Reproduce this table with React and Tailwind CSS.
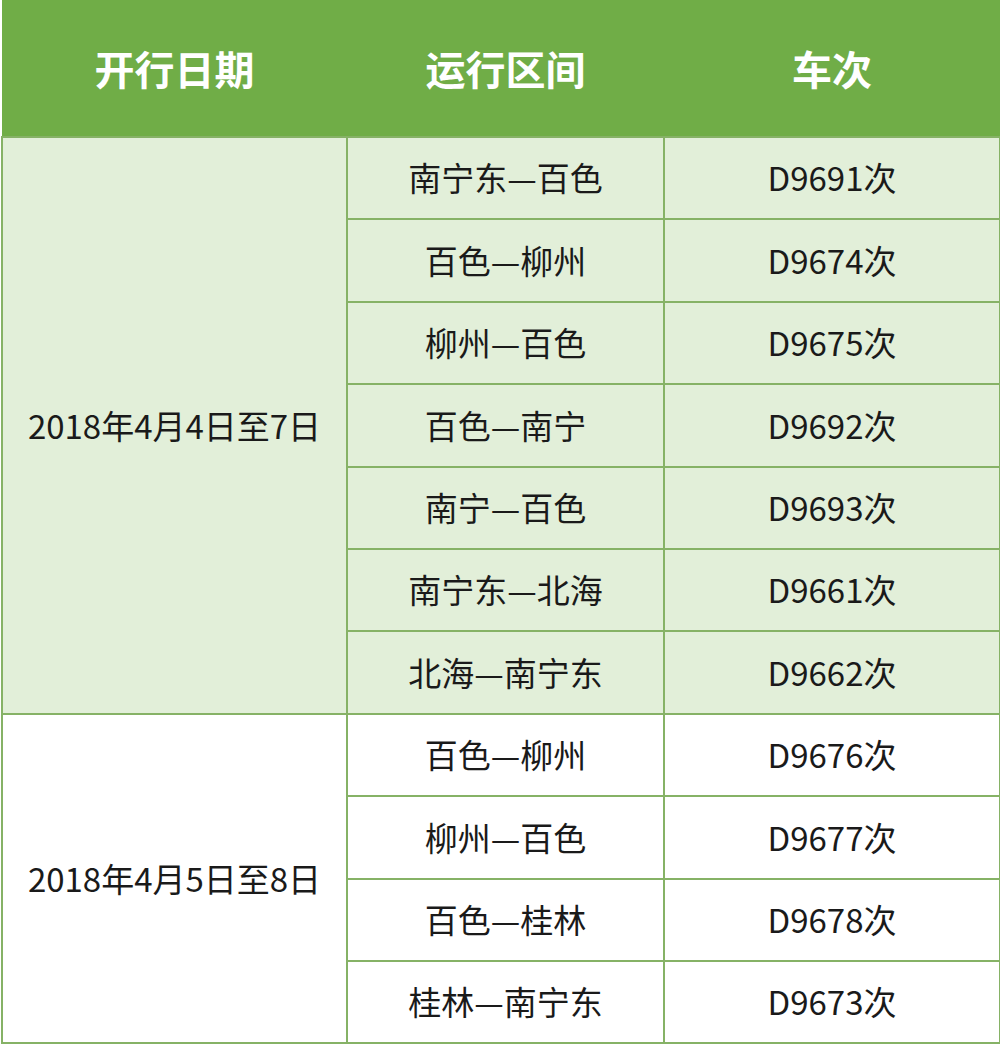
const groups = [
  {
    date: "2018年4月4日至7日",
    rows: [
      ["南宁东—百色", "D9691次"],
      ["百色—柳州", "D9674次"],
      ["柳州—百色", "D9675次"],
      ["百色—南宁", "D9692次"],
      ["南宁—百色", "D9693次"],
      ["南宁东—北海", "D9661次"],
      ["北海—南宁东", "D9662次"],
    ],
    bg: "bg-[#e2efd9]",
  },
  {
    date: "2018年4月5日至8日",
    rows: [
      ["百色—柳州", "D9676次"],
      ["柳州—百色", "D9677次"],
      ["百色—桂林", "D9678次"],
      ["桂林—南宁东", "D9673次"],
    ],
    bg: "bg-white",
  },
];

const cell = "border-2 border-[#86b266] text-center align-middle text-[33px] text-[#1a1a1a]";

export default function App() {
  return (
    <div
      className="w-[1000px] h-[1047px] bg-white"
      style={{ fontFamily: '"Noto Sans CJK SC", "Noto Sans", sans-serif' }}
    >
      <table className="table-fixed border-collapse w-[998px] ml-px">
        <colgroup>
          <col className="w-[345px]" />
          <col className="w-[317px]" />
          <col className="w-[336px]" />
        </colgroup>
        <thead>
          <tr className="h-[137px] bg-[#70ad47]">
            <th className="text-white text-[40px] font-bold">开行日期</th>
            <th className="text-white text-[40px] font-bold">运行区间</th>
            <th className="text-white text-[40px] font-bold">车次</th>
          </tr>
        </thead>
        <tbody>
          {groups.map((g) =>
            g.rows.map((r, i) => (
              <tr key={g.date + i} className={`h-[82.4px] ${g.bg}`}>
                {i === 0 && (
                  <td rowSpan={g.rows.length} className={cell}>
                    {g.date}
                  </td>
                )}
                <td className={cell}>{r[0]}</td>
                <td className={cell}>{r[1]}</td>
              </tr>
            ))
          )}
        </tbody>
      </table>
    </div>
  );
}
